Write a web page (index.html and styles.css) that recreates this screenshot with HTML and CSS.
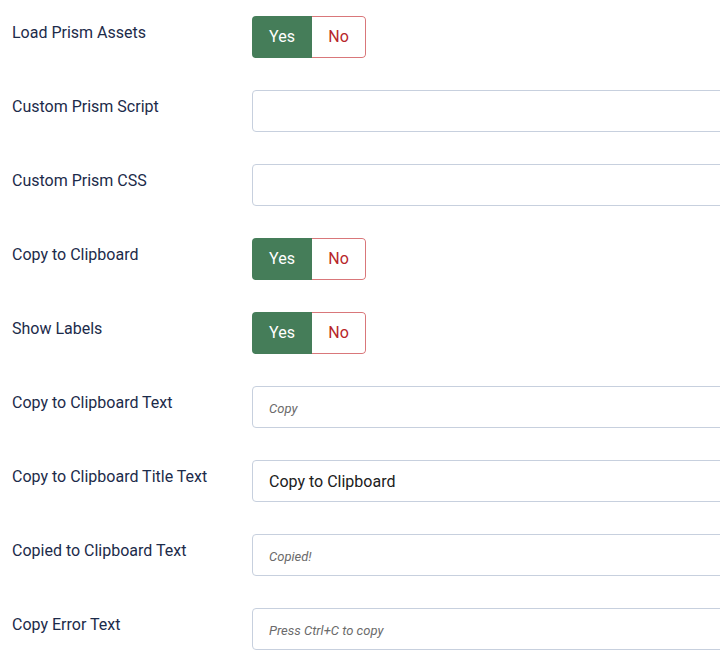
FILE: index.html
```html
<!DOCTYPE html>
<html lang="en">
<head>
<meta charset="utf-8">
<title>Prism options</title>
<link rel="stylesheet" href="styles.css">
</head>
<body>
<form class="options">
  <div class="row">
    <label class="label">Load Prism Assets</label>
    <div class="switch"><span class="yes">Yes</span><span class="no">No</span></div>
  </div>
  <div class="row">
    <label class="label">Custom Prism Script</label>
    <input class="field" type="text">
  </div>
  <div class="row">
    <label class="label">Custom Prism CSS</label>
    <input class="field" type="text">
  </div>
  <div class="row">
    <label class="label">Copy to Clipboard</label>
    <div class="switch"><span class="yes">Yes</span><span class="no">No</span></div>
  </div>
  <div class="row">
    <label class="label">Show Labels</label>
    <div class="switch"><span class="yes">Yes</span><span class="no">No</span></div>
  </div>
  <div class="row">
    <label class="label">Copy to Clipboard Text</label>
    <input class="field" type="text" placeholder="Copy">
  </div>
  <div class="row">
    <label class="label">Copy to Clipboard Title Text</label>
    <input class="field" type="text" value="Copy to Clipboard">
  </div>
  <div class="row">
    <label class="label">Copied to Clipboard Text</label>
    <input class="field" type="text" placeholder="Copied!">
  </div>
  <div class="row">
    <label class="label">Copy Error Text</label>
    <input class="field" type="text" placeholder="Press Ctrl+C to copy">
  </div>
</form>
</body>
</html>
```

FILE: styles.css
```css
html, body {
  margin: 0;
  padding: 0;
  background: #ffffff;
  overflow: hidden;
}
body {
  font-family: Roboto, "Liberation Sans", sans-serif;
}
.options {
  width: 720px;
  box-sizing: border-box;
  overflow: hidden;
  padding: 16px 0 0 12px;
  display: flex;
  flex-direction: column;
  gap: 32px;
}
.row {
  display: grid;
  grid-template-columns: 240px 520px;
  align-items: start;
}
.label {
  font-size: 16px;
  line-height: 24px;
  color: #1c2b4a;
  padding-top: 5px;
}
.switch {
  display: flex;
  width: 114px;
  height: 42px;
  box-sizing: border-box;
  border-radius: 4px;
  overflow: hidden;
  font-size: 16px;
  line-height: 20px;
}
.switch span {
  display: flex;
  align-items: center;
  justify-content: center;
  padding-bottom: 1px;
}
.yes {
  width: 60px;
  background: #457d59;
  color: #ffffff;
}
.no {
  width: 54px;
  box-sizing: border-box;
  border: 1px solid #d9777a;
  border-left: none;
  border-radius: 0 4px 4px 0;
  color: #b7262a;
}
.field {
  display: block;
  width: 520px;
  height: 42px;
  box-sizing: border-box;
  margin: 0;
  border: 1px solid #c7d0de;
  border-radius: 4px;
  padding: 0 16px;
  font-family: Roboto, "Liberation Sans", sans-serif;
  font-size: 16px;
  color: #202020;
  background: #fff;
}
.field::placeholder {
  font-style: italic;
  font-size: 13px;
  color: #6b6b6b;
}
```
